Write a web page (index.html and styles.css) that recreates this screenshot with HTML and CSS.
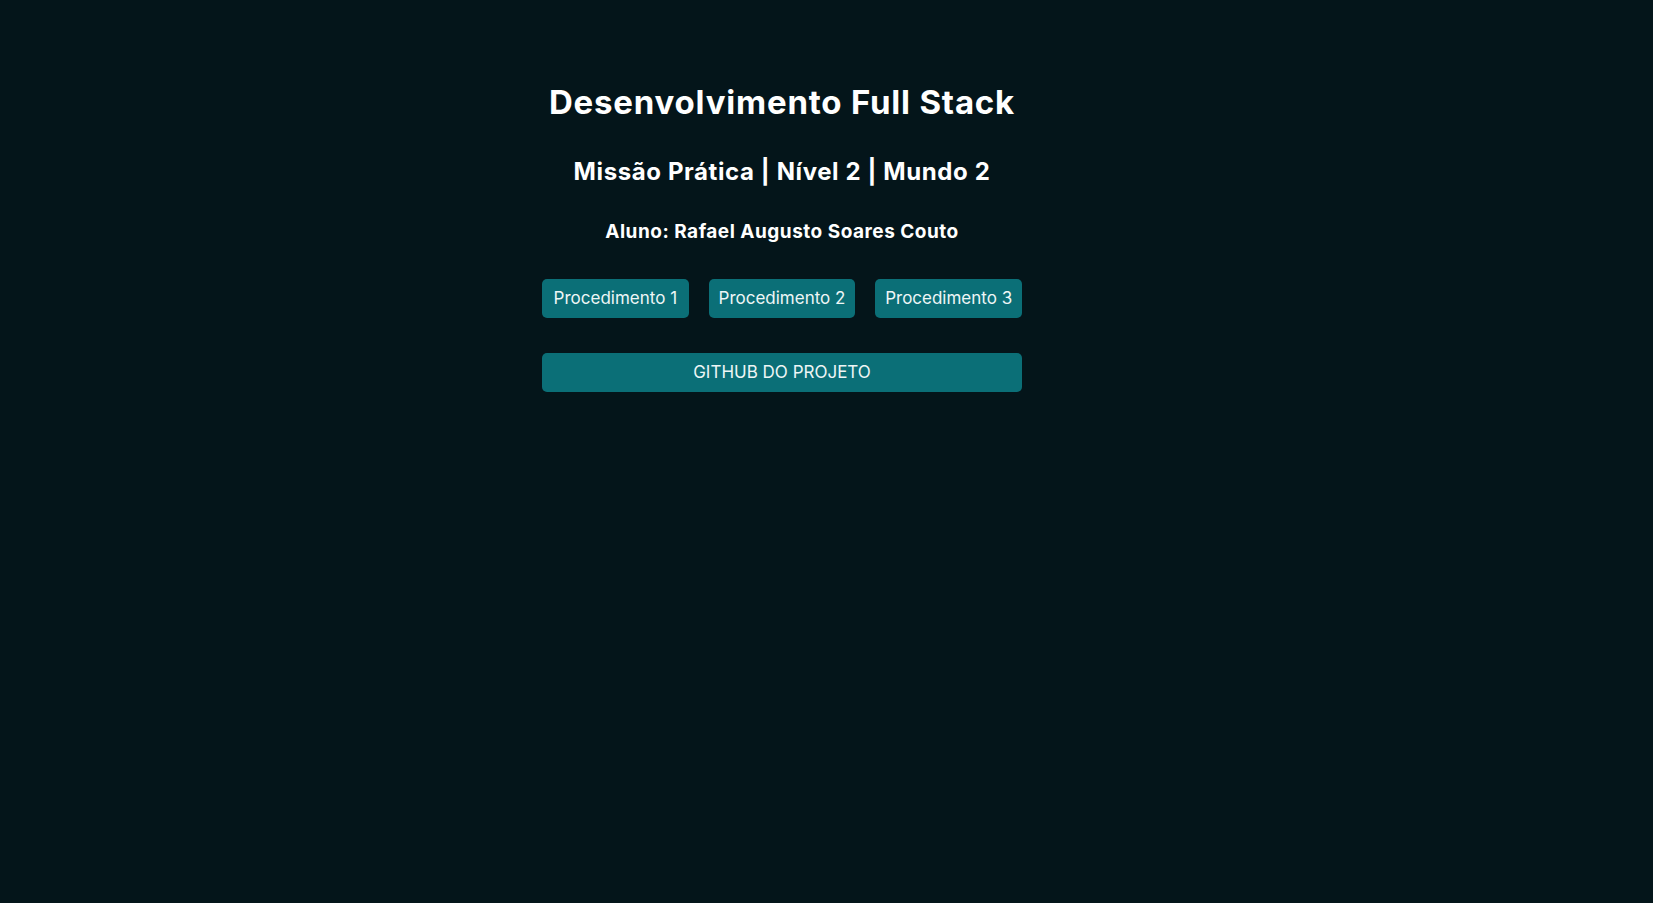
FILE: index.html
```html
<!DOCTYPE html>
<html lang="pt-BR">
<head>
<meta charset="utf-8">
<title>Desenvolvimento Full Stack</title>
<link rel="stylesheet" href="styles.css">
</head>
<body>
  <main class="wrap">
    <h1 class="title">Desenvolvimento Full Stack</h1>
    <h2 class="subtitle">Missão Prática | Nível 2 | Mundo 2</h2>
    <h3 class="student">Aluno: Rafael Augusto Soares Couto</h3>
    <nav class="procs">
      <a class="btn" href="#">Procedimento 1</a>
      <a class="btn" href="#">Procedimento 2</a>
      <a class="btn" href="#">Procedimento 3</a>
    </nav>
    <a class="btn btn-wide" href="#">GITHUB DO PROJETO</a>
  </main>
</body>
</html>
```

FILE: styles.css
```css
html, body {
  margin: 0;
  padding: 0;
  background: #04151a;
  height: 100%;
}

body {
  font-family: Inter, "Noto Sans", sans-serif;
  color: #ffffff;
}

.wrap {
  width: 480px;
  margin-left: 542px;
  padding-top: 82px;
  display: flex;
  flex-direction: column;
  align-items: stretch;
}

.title, .subtitle, .student {
  margin: 0;
  text-align: center;
  font-weight: 700;
  white-space: nowrap;
}

.title {
  font-size: 33px;
  line-height: 40px;
  letter-spacing: 0.8px;
}

.subtitle {
  font-size: 24px;
  line-height: 30px;
  margin-top: 34.6px;
  letter-spacing: 0.6px;
}

.student {
  font-size: 19px;
  line-height: 24px;
  margin-top: 33.8px;
  letter-spacing: 0.5px;
}

.procs {
  margin-top: 34.6px;
  display: flex;
  gap: 20px;
}

.btn {
  display: block;
  flex: 1;
  height: 39px;
  line-height: 39px;
  text-align: center;
  background: #0b6f77;
  color: #eef6f6;
  border-radius: 5px;
  font-size: 17px;
  font-weight: 400;
  text-decoration: none;
}

.btn-wide {
  margin-top: 35px;
}
```
